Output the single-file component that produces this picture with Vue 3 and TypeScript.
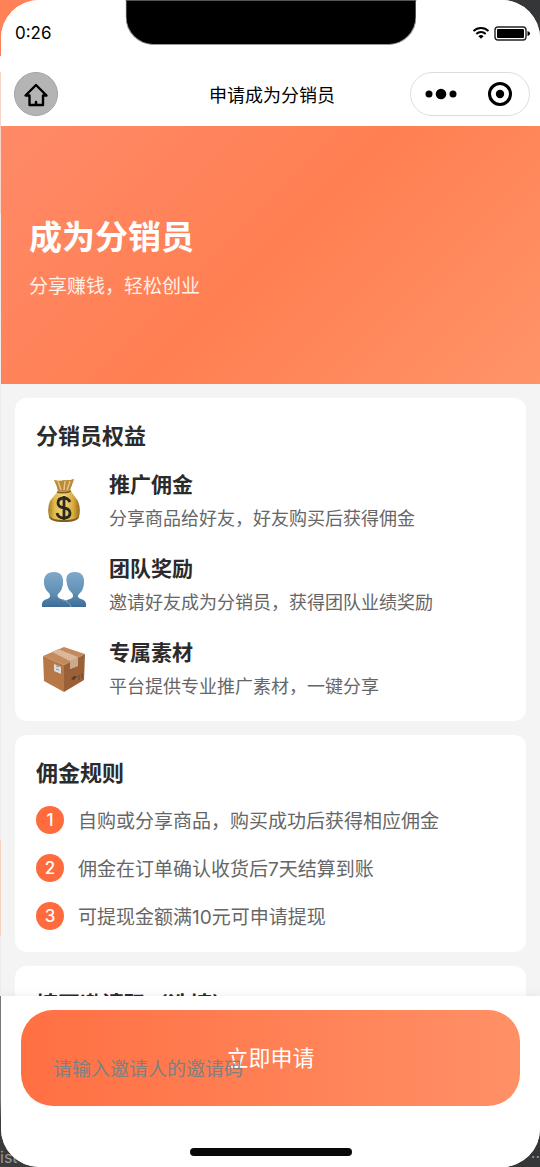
<script setup lang="ts">
import { ref } from 'vue'

interface Benefit {
  icon: 'bag' | 'people' | 'box'
  name: string
  desc: string
}

const benefits: Benefit[] = [
  { icon: 'bag', name: '推广佣金', desc: '分享商品给好友，好友购买后获得佣金' },
  { icon: 'people', name: '团队奖励', desc: '邀请好友成为分销员，获得团队业绩奖励' },
  { icon: 'box', name: '专属素材', desc: '平台提供专业推广素材，一键分享' },
]

const rules: string[] = [
  '自购或分享商品，购买成功后获得相应佣金',
  '佣金在订单确认收货后7天结算到账',
  '可提现金额满10元可申请提现',
]

const inviteCode = ref('')
</script>

<template>
  <div class="desk">
    <span class="desk-text">ist</span>
    <span class="desk-dots">··</span>
    <div class="phone">
      <div class="notch"></div>
      <header class="top">
        <div class="status">
          <span>0:26</span>
          <div class="signals">
            <svg width="18" height="14" viewBox="0 0 18 14" fill="none" stroke="#000" stroke-width="2">
              <path d="M1.5 5A10.6 10.6 0 0 1 16.500 5" />
              <path d="M4.300 8A6.700 6.700 0 0 1 13.700 8" />
              <path d="M9 12.800L6.400 10.300A3.800 3.800 0 0 1 11.600 10.300Z" fill="#000" stroke="none" />
            </svg>
            <svg width="37" height="15" viewBox="0 0 37 15">
              <rect x="1" y="1" width="31" height="13" rx="3" fill="none" stroke="#222" stroke-width="1.400" />
              <rect x="3" y="3" width="27" height="9" rx="1" fill="#000" />
              <path d="M33.500 5Q36 5.500 36 7.500T33.500 10Z" fill="#000" />
            </svg>
          </div>
        </div>
        <nav class="nav">
          <button class="home" type="button" aria-label="首页">
            <svg width="26" height="26" viewBox="0 0 26 26" fill="none" stroke="#000" stroke-width="2.400" stroke-linejoin="round" stroke-linecap="round">
              <path d="M13 3L2.500 13.500H6.500V23H20V13.500H23.500Z" />
              <path d="M13 20V22.500" stroke-width="2.500" />
            </svg>
          </button>
          <h1>申请成为分销员</h1>
          <div class="capsule">
            <button type="button" aria-label="更多">
              <svg width="32" height="12" viewBox="0 0 32 12">
                <circle cx="4" cy="6" r="3.500" />
                <circle cx="16" cy="6" r="5.300" />
                <circle cx="28" cy="6" r="3.500" />
              </svg>
            </button>
            <button type="button" aria-label="关闭">
              <svg width="26" height="26" viewBox="0 0 26 26">
                <circle cx="13" cy="13" r="10.500" fill="none" stroke="#000" stroke-width="3" />
                <circle cx="13" cy="13" r="4.200" />
              </svg>
            </button>
          </div>
        </nav>
      </header>

      <main>
        <section class="hero">
          <h2>成为分销员</h2>
          <p>分享赚钱，轻松创业</p>
        </section>

        <section class="card">
          <h3>分销员权益</h3>
          <ul class="benefits">
            <li v-for="b in benefits" :key="b.icon">
              <svg v-if="b.icon === 'bag'" class="emoji" viewBox="0 0 56 56">
                <defs>
                  <linearGradient id="gold" x1="0" x2="1">
                    <stop offset="0" stop-color="#a57c20" />
                    <stop offset=".2" stop-color="#e0bb4d" />
                    <stop offset=".5" stop-color="#f2d878" />
                    <stop offset=".8" stop-color="#d5aa3c" />
                    <stop offset="1" stop-color="#96691b" />
                  </linearGradient>
                </defs>
                <path d="M18 8Q24 9 28 8Q33 9 38 7Q36 13 34 18L42 29Q45 37 43 45Q41 49 28 49Q15 49 13 45Q11 36 14 29L22 19Q21 13 18 8Z" fill="url(#gold)" />
                <path d="M18 8Q24 10 28 8Q33 9 38 7L34 18Q28 21 22 19Q21 13 18 8Z" fill="#b98a3b" />
                <path d="M22 9L25 18M29 9L28 18M34 9L31 18" stroke="#e5c584" stroke-width="1.500" />
                <path d="M13 44Q16 48 28 48T43 44Q43 50 28 50T13 44Z" fill="#85601e" />
                <path d="M21 20Q28 22 35 19" stroke="#7e5b22" stroke-width="1.500" fill="none" />
                <path d="M34 30Q32 26 28 26Q22 26 22 31Q22 35 28 36T34 41Q34 46 28 46Q22 46 21 41M28 24V48" fill="none" stroke="#2f281d" stroke-width="2.800" />
              </svg>
              <svg v-else-if="b.icon === 'people'" class="emoji" viewBox="0 0 56 56">
                <defs>
                  <linearGradient id="blue" x1="0" y1="0" x2="0" y2="1">
                    <stop offset="0" stop-color="#7fa9ca" />
                    <stop offset=".6" stop-color="#608fb5" />
                    <stop offset="1" stop-color="#3c6c94" />
                  </linearGradient>
                </defs>
                <g transform="translate(0 5)">
                  <path d="M28 46Q27 39 34 38Q39 36 36 32Q32 29 31 23Q28 11 39 11Q49 11 48 23Q47 30 43 33Q40 36 45 38Q51 39 50 46Z" fill="url(#blue)" />
                  <path d="M6 46Q5 39 11 38Q16 36 13 32Q9 29 8 23Q7 11 18 11Q28 11 27 23Q26 30 22 33Q20 36 25 38Q33 39 35 46Z" fill="url(#blue)" />
                  <path d="M27 39Q33 40 35 46" stroke="#7da6c4" fill="none" />
                </g>
              </svg>
              <svg v-else class="emoji" viewBox="0 0 56 56">
                <g transform="translate(0 2)">
                  <path d="M7 14L28 5L49 12L28 23Z" fill="#c48a5b" />
                  <path d="M7 14L28 23V50L8 39Z" fill="#b77847" />
                  <path d="M28 23L49 12L48 38L28 50Z" fill="#9a6139" />
                  <path d="M16 10L22 7L42 15V24L34 27V19Z" fill="#d9b99a" />
                  <path d="M34 19L42 15V24L34 27Z" fill="#c9aa8a" />
                  <path d="M18 22L25 25V32L18 29Z" fill="#dfdcd6" />
                  <path d="M20 24L23 25M20 27L23 28" stroke="#8895a0" />
                  <path d="M35 37L38 34L41 34L38 38Z" fill="#5a3a26" />
                  <path d="M43 33V38M46 31V36" stroke="#6d462b" fill="none" />
                </g>
              </svg>
              <div>
                <h4>{{ b.name }}</h4>
                <p>{{ b.desc }}</p>
              </div>
            </li>
          </ul>
        </section>

        <section class="card">
          <h3>佣金规则</h3>
          <ol class="rules">
            <li v-for="(rule, i) in rules" :key="i">
              <span class="num">{{ i + 1 }}</span>
              <span class="rule">{{ rule }}</span>
            </li>
          </ol>
        </section>

        <section class="card">
          <h3><label for="invite">填写邀请码（选填）</label></h3>
          <input id="invite" v-model="inviteCode" type="text" placeholder="请输入邀请人的邀请码" />
        </section>
      </main>

      <footer class="bar">
        <button type="button">立即申请</button>
        <div class="indicator"></div>
      </footer>
    </div>
  </div>
</template>

<style>
body {
  margin: 0;
}
</style>

<style scoped>
* {
  box-sizing: border-box;
  margin: 0;
  padding: 0;
}

button,
input {
  border: 0;
  background: none;
  font: inherit;
}

ul,
ol {
  list-style: none;
}

.desk {
  position: relative;
  height: 100vh;
  padding-left: 1px;
  overflow: hidden;
  font-family: Inter, "Noto Sans CJK SC", sans-serif;
  background:
    linear-gradient(#ff8158 0 56px, #fff 56px 72px, #fbd4c8 72px 214px, #ececec 214px 840px, #f6cfc0 840px 936px, #ececec 936px 996px, #777 996px 1100px, #3b3b3b 1120px) left / 50% 100% no-repeat,
    #353638;
}

.desk-text,
.desk-dots {
  position: absolute;
  bottom: 0;
  color: #999;
  font-size: 16px;
  line-height: 20px;
}

.desk-text {
  left: 0;
}

.desk-dots {
  right: 0;
}

.phone {
  position: relative;
  display: flex;
  flex-direction: column;
  height: 100%;
  overflow: hidden;
  border-radius: 38px;
  background: #f4f4f4;
}

.notch {
  position: absolute;
  z-index: 4;
  top: 0;
  left: 50%;
  width: 54%;
  height: 45px;
  transform: translateX(-50%);
  border: 1px solid #999;
  border-top-color: #555;
  border-radius: 0 0 28px 28px;
  background: #000;
}

.top {
  flex: none;
  background: #fff;
}

.status {
  display: flex;
  align-items: center;
  justify-content: space-between;
  height: 66px;
  padding: 0 9px 0 14px;
  font-size: 17px;
}

.signals {
  display: flex;
  align-items: center;
  gap: 4px;
}

.nav {
  display: grid;
  grid-template-columns: 1fr auto 1fr;
  align-items: center;
  height: 60px;
  padding: 0 10px 4px 13px;
}

.nav h1 {
  padding-top: 4px;
  font-size: 18px;
  font-weight: 400;
  line-height: 26px;
}

.home {
  display: grid;
  place-items: center;
  width: 44px;
  height: 44px;
  padding-top: 2px;
  border: 1px solid #a3a3a3;
  border-radius: 50%;
  background: #b4b4b4;
}

.capsule {
  display: flex;
  justify-self: end;
  width: 120px;
  height: 44px;
  border: 1px solid #dcdcdc;
  border-radius: 22px;
}

.capsule button {
  display: grid;
  flex: 1;
  place-items: center;
}

main {
  flex: 1;
  min-height: 0;
}

.hero {
  display: flex;
  flex-direction: column;
  justify-content: center;
  gap: 12px;
  height: 258px;
  padding: 6px 28px 0;
  color: #fff;
  background: linear-gradient(135deg, #ff8a68 0%, #ff7f52 50%, #ff9468 100%);
}

.hero h2 {
  font-size: 33px;
  font-weight: 700;
  line-height: 46px;
}

.hero p {
  color: #fff0e8;
  font-size: 19px;
  line-height: 30px;
}

.card {
  margin: 14px 14px 0;
  padding: 21px;
  border-radius: 12px;
  background: #fff;
}

.card h3 {
  margin-bottom: 15px;
  color: #2b2b2b;
  font-size: 22px;
  font-weight: 700;
  line-height: 34px;
}

.benefits {
  display: grid;
  gap: 20px;
}

.benefits li {
  display: flex;
  align-items: center;
  gap: 17px;
}

.emoji {
  flex: none;
  width: 56px;
  height: 56px;
}

.benefits h4 {
  margin-bottom: 3px;
  color: #2b2b2b;
  font-size: 21px;
  font-weight: 700;
  line-height: 34px;
}

.benefits p {
  color: #666;
  font-size: 18px;
  line-height: 27px;
}

.rules {
  display: grid;
  gap: 18px;
}

.rules li {
  display: flex;
  align-items: center;
  gap: 14px;
  height: 30px;
  color: #666;
  font-size: 19px;
}

.rule {
  padding-top: 4px;
  line-height: 30px;
}

.num {
  flex: none;
  width: 28px;
  height: 28px;
  border-radius: 50%;
  color: #fff;
  background: #ff6b3d;
  font-size: 17px;
  font-weight: 500;
  line-height: 28px;
  text-align: center;
}

.card input {
  position: relative;
  z-index: 3;
  width: 100%;
  height: 66px;
  padding: 0 17px;
  color: #333;
  font-size: 19px;
  outline: 0;
}

.card input::placeholder {
  color: #808080;
  opacity: 1;
}

.bar {
  position: absolute;
  z-index: 2;
  right: 0;
  bottom: 0;
  left: 0;
  padding: 14px 20px 11px;
  background: #fff;
  box-shadow: 0 -2px 8px rgba(0, 0, 0, 0.05);
}

.bar button {
  display: block;
  width: 100%;
  height: 96px;
  padding-bottom: 4px;
  border-radius: 32px;
  color: #fff;
  background: linear-gradient(90deg, #ff7043, #ff9066);
  font-size: 22px;
}

.indicator {
  width: 162px;
  height: 8px;
  margin: 42px auto 0;
  border-radius: 4px;
  background: #080808;
}
</style>
